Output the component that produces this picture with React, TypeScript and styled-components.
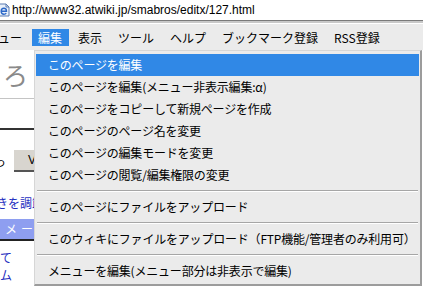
import React from 'react';
import styled, {createGlobalStyle} from 'styled-components';

const GlobalStyle = createGlobalStyle`
  html, body {
    margin: 0;
    padding: 0;
    background: #fff;
    overflow: hidden;
  }
  body {
    font-family: "Noto Sans CJK JP", "Liberation Sans", sans-serif;
  }
`;

const Window = styled.div`
  position: relative;
  width: 423px;
  height: 288px;
  overflow: hidden;
  background: #fff;
`;

const AddressBar = styled.div`
  display: flex;
  align-items: center;
  height: 20px;
  background: #fff;
  font-family: "Liberation Sans", Arial, sans-serif;
  font-size: 12px;
  color: #000;
  > svg {
    margin-left: -2px;
    margin-right: 2px;
    flex: none;
  }
`;

const BarDivider = styled.div`
  height: 4px;
  border-top: 1px solid #7a7a7a;
  border-bottom: 1px solid #fff;
  background: #c8c8c8;
  box-sizing: border-box;
`;

const MenuBar = styled.div`
  display: flex;
  align-items: center;
  height: 26px;
  background: #ebebeb;
  font-size: 12px;
  white-space: nowrap;
`;

const MenuTitle = styled.div<{ $active?: boolean; $shift?: number }>`
  padding: 0 7px 0 6px;
  height: 17px;
  line-height: 17px;
  margin-left: ${p => p.$shift ?? 3}px;
  background: ${p => p.$active ? '#3088e6' : 'transparent'};
  color: ${p => p.$active ? '#fff' : '#000'};
`;

const Page = styled.div`
  width: 200px;
  font-size: 12px;
`;

const TitleBox = styled.div`
  height: 48px;
  padding-left: 3px;
  border-bottom: 1px solid #c4c4c4;
  font-size: 25px;
  line-height: 48px;
  color: #8a8a8a;
`;

const RuleDark = styled.div`
  margin-top: 29px;
  border-top: 2px solid #333;
`;

const ButtonRow = styled.div`
  display: flex;
  align-items: center;
  gap: 8px;
  margin-top: 20px;
  margin-left: -6px;
`;

const FakeButton = styled.div`
  height: 20px;
  width: 26px;
  padding-left: 14px;
  background: #d8d5cf;
  border-bottom: 2px solid #555;
  border-right: 1px solid #777;
  line-height: 20px;
  font-family: "Liberation Sans", Arial, sans-serif;
`;

const PageLink = styled.div<{ $indent?: number; $top?: number }>`
  color: #1f2fbf;
  font-size: 12px;
  line-height: 17px;
  margin-left: ${p => p.$indent ?? 0}px;
  margin-top: ${p => p.$top ?? 0}px;
`;

const SideHeading = styled.div`
  margin-top: 8px;
  height: 20px;
  line-height: 20px;
  padding-left: 5px;
  background: #8e9ef0;
  color: #fff;
  letter-spacing: 4px;
  border-bottom: 2px solid #222;
  margin-bottom: 8px;
`;

const Dropdown = styled.div`
  position: absolute;
  left: 34px;
  top: 50px;
  width: 388px;
  box-sizing: border-box;
  padding: 3px 1px 2px 1px;
  background: #ebebeb;
  border-left: 1px solid #d6d6d6;
  border-top: 1px solid #d6d6d6;
  border-right: 2px solid #9c9c9c;
  border-bottom: 2px solid #9c9c9c;
  font-size: 12px;
  color: #000;
  white-space: nowrap;
`;

const Item = styled.div<{ $active?: boolean }>`
  height: 22px;
  line-height: 22px;
  padding-left: 12px;
  background: ${p => p.$active ? '#3088e6' : 'transparent'};
  color: ${p => p.$active ? '#fff' : '#000'};
  letter-spacing: -0.2px;
`;

const Separator = styled.div<{ $h?: number }>`
  height: ${p => p.$h ?? 10}px;
  display: flex;
  align-items: center;
  padding: 0 1px;
  &::after {
    content: '';
    flex: 1;
    border-top: 1px solid #a6a6a6;
    border-bottom: 1px solid #fff;
  }
`;

const PageIcon = () => (
  <svg width="12" height="14" viewBox="0 0 12 14">
    <path d="M1 1h7l3 3v9H1z" fill="#e8f0fa" stroke="#5a7ab0" strokeWidth="1"/>
    <path d="M8 1v3h3" fill="none" stroke="#5a7ab0" strokeWidth="1"/>
    <path d="M3.2 8.2h5.3c0-2-1.1-3-2.6-3S3.2 6.4 3.2 8.2c0 2 1.2 3 2.7 3 1 0 1.8-.4 2.3-1.2"
      fill="none" stroke="#2b67c8" strokeWidth="1.4"/>
  </svg>
);

const menuTitles = ['編集', '表示', 'ツール', 'ヘルプ', 'ブックマーク登録', 'RSS登録'];

type Entry = { label: string } | 'sep';

const entries: Entry[] = [
  {label: 'このページを編集'},
  {label: 'このページを編集(メニュー非表示編集:α)'},
  {label: 'このページをコピーして新規ページを作成'},
  {label: 'このページのページ名を変更'},
  {label: 'このページの編集モードを変更'},
  {label: 'このページの閲覧/編集権限の変更'},
  'sep',
  {label: 'このページにファイルをアップロード'},
  'sep',
  {label: 'このウィキにファイルをアップロード（FTP機能/管理者のみ利用可）'},
  'sep',
  {label: 'メニューを編集(メニュー部分は非表示で編集)'},
];

const App = () => {
  return (
    <Window>
      <GlobalStyle/>
      <AddressBar>
        <PageIcon/>
        <span>http://www32.atwiki.jp/smabros/editx/127.html</span>
      </AddressBar>
      <BarDivider/>
      <MenuBar>
        <MenuTitle $shift={-32}>メニュー</MenuTitle>
        {menuTitles.map((t, i) => (
          <MenuTitle key={t} $active={i === 0}>{t}</MenuTitle>
        ))}
      </MenuBar>

      <Page>
        <TitleBox>ろ</TitleBox>
        <RuleDark/>
        <ButtonRow>
          <span>っ</span>
          <FakeButton>V</FakeButton>
        </ButtonRow>
        <PageLink $indent={-4} $top={22}>きを調節</PageLink>
        <SideHeading>メール</SideHeading>
        <PageLink>て</PageLink>
        <PageLink>ム</PageLink>
      </Page>

      <Dropdown>
        {entries.map((e, i) => e === 'sep'
          ? <Separator key={i}/>
          : <Item key={i} $active={i === 0}>{e.label}</Item>
        )}
      </Dropdown>
    </Window>
  );
};

export default App;
